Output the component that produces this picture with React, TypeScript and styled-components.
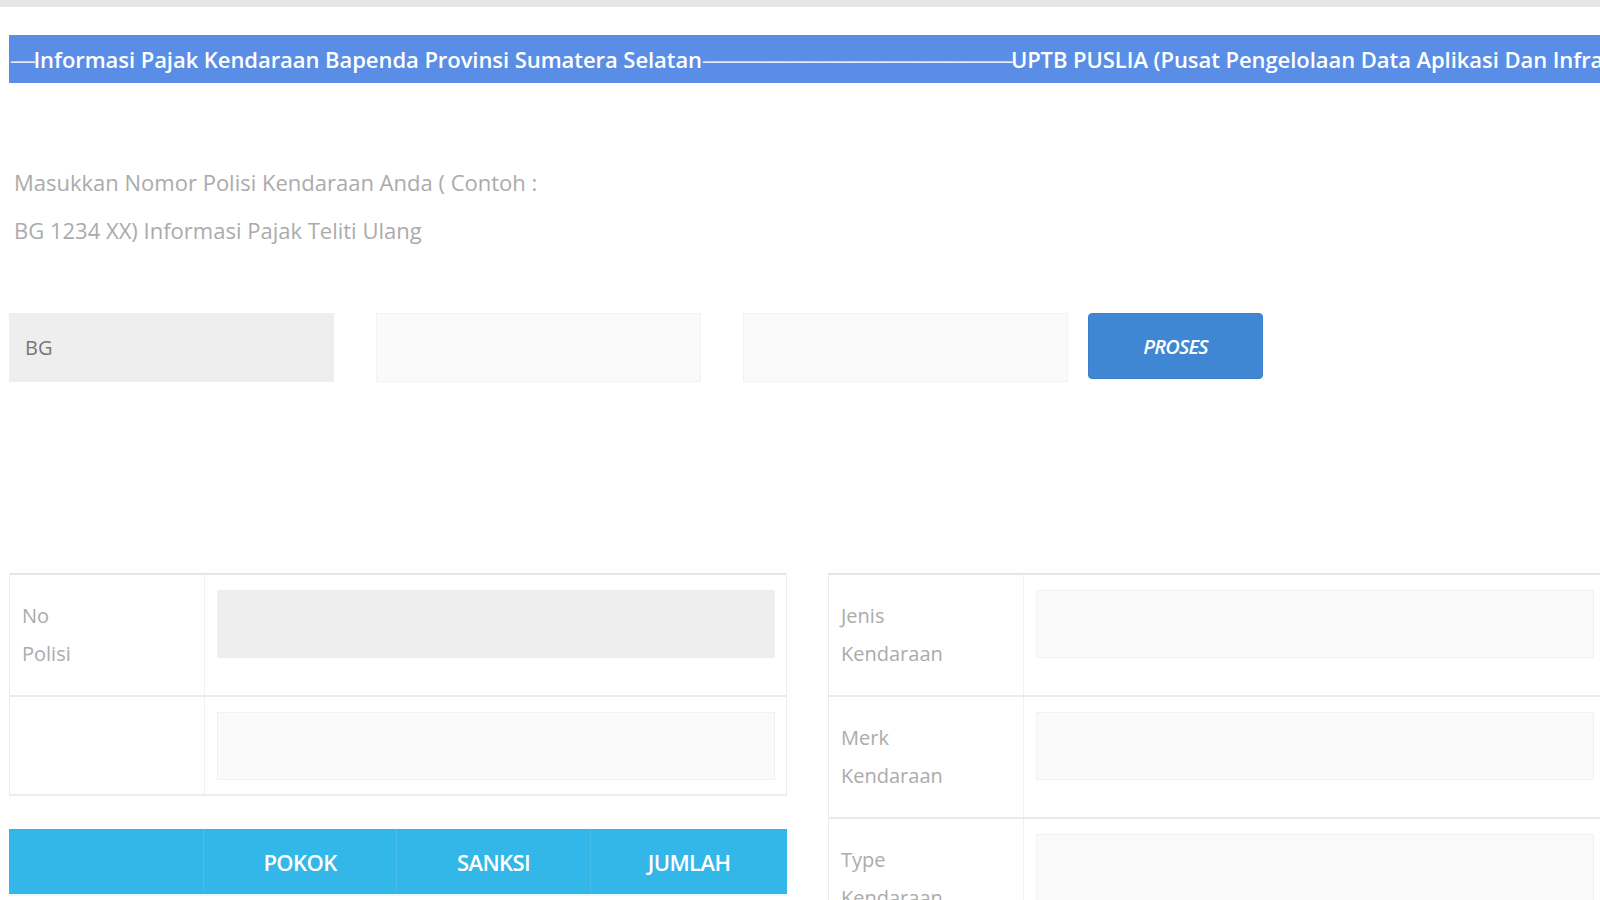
import React, { FC } from 'react';
import styled, { createGlobalStyle } from 'styled-components';

const GlobalStyle = createGlobalStyle`
    html, body {
        margin: 0;
        padding: 0;
        background: #ffffff;
        overflow: hidden;
    }
    body {
        font-family: "Open Sans", "Liberation Sans", sans-serif;
    }
`;

const TopStripe = styled.div`
    height: 7px;
    background: #e6e6e6;
`;

const Page = styled.div`
    width: 1640px;
    padding: 28px 0 0 9px;
    box-sizing: border-box;
`;

const Banner = styled.div`
    height: 48px;
    display: flex;
    align-items: center;
    background: #5a8ee6;
    color: #ffffff;
    font-size: 22px;
    font-weight: 600;
    letter-spacing: -0.06px;
    white-space: nowrap;
    overflow: hidden;
    padding-left: 1px;
`;

const Dash = styled.span`
    letter-spacing: -2.4px;
    opacity: 0.85;
    font-weight: 400;
`;

const Intro = styled.p`
    width: 540px;
    margin: 75px 0 0 5px;
    font-size: 22px;
    line-height: 48px;
    color: #ababab;
`;

const PlateRow = styled.div`
    display: flex;
    align-items: flex-start;
    gap: 42px;
    margin-top: 59px;
`;

const PlateInput = styled.div<{ $filled?: boolean }>`
    width: 325px;
    height: 69px;
    box-sizing: border-box;
    display: flex;
    align-items: center;
    padding-left: 15px;
    font-size: 20px;
    color: #777777;
    background: ${(p) => (p.$filled ? '#eeeeee' : '#fafafa')};
    border: 1px solid ${(p) => (p.$filled ? '#eeeeee' : '#f2f2f2')};
`;

const ProsesButton = styled.button`
    margin-left: -22px;
    width: 175px;
    height: 66px;
    border: 1px solid #3a7fc8;
    border-radius: 4px;
    background: #3f87d2;
    color: #ffffff;
    font-family: "Open Sans", "Liberation Sans", sans-serif;
    font-size: 20px;
    font-weight: 600;
    font-style: italic;
    letter-spacing: -0.8px;
    cursor: pointer;
`;

const Columns = styled.div`
    display: flex;
    align-items: flex-start;
    gap: 41px;
    margin-top: 191px;
`;

const Column = styled.div`
    width: 778px;
    display: flex;
    flex-direction: column;
`;

const DataTable = styled.div`
    border: 1px solid #ececec;
    border-top: 2px solid #e6e6e6;
`;

const DataRow = styled.div`
    display: grid;
    grid-template-columns: 195px 1fr;
    border-bottom: 2px solid #eaeaea;

    &:last-child {
        border-bottom: 1px solid #ededed;
    }
`;

const LabelCell = styled.div`
    padding: 22px 12px;
    font-size: 20px;
    line-height: 38px;
    color: #ababab;
    border-right: 1px solid #f1f1f1;
`;

const ValueCell = styled.div`
    padding: 15px 11px 14px 12px;
`;

const ValueBox = styled.div<{ $filled?: boolean }>`
    height: 68px;
    box-sizing: border-box;
    background: ${(p) => (p.$filled ? '#eeeeee' : '#fafafa')};
    border: 1px solid ${(p) => (p.$filled ? '#eeeeee' : '#f1f1f1')};
`;

const SumHeader = styled.div`
    margin-top: 33px;
    height: 65px;
    display: grid;
    grid-template-columns: 195px 193px 194px 1fr;
    background: #33b6e8;
    box-shadow: 0 2px 0 #e9f6fc;
`;

const SumCell = styled.div`
    display: flex;
    align-items: center;
    justify-content: center;
    color: #ffffff;
    font-size: 22px;
    font-weight: 600;
    letter-spacing: -0.6px;
    border-right: 1px solid rgba(255, 255, 255, 0.1);

    &:last-child {
        border-right: none;
    }
`;

const leftRows = [
    { label: ['No', 'Polisi'], filled: true },
    { label: [], filled: false },
];

const rightRows = [
    { label: ['Jenis', 'Kendaraan'] },
    { label: ['Merk', 'Kendaraan'] },
    { label: ['Type', 'Kendaraan'] },
    { label: ['Tahun', 'Pembuatan'] },
];

const Label: FC<{ lines: string[] }> = ({ lines }) => (
    <LabelCell>
        {lines.map((l, i) => (
            <div key={i}>{l}</div>
        ))}
    </LabelCell>
);

const App: FC = () => {
    return (
        <>
            <GlobalStyle />
            <TopStripe />
            <Page>
                <Banner>
                    <Dash>{'-'.repeat(5)}</Dash>
                    Informasi Pajak Kendaraan Bapenda Provinsi Sumatera Selatan
                    <Dash>{'-'.repeat(66)}</Dash>
                    UPTB PUSLIA (Pusat Pengelolaan Data Aplikasi Dan Infrastruktur)
                </Banner>

                <Intro>
                    Masukkan Nomor Polisi Kendaraan Anda ( Contoh : BG 1234 XX) Informasi Pajak Teliti Ulang
                </Intro>

                <PlateRow>
                    <PlateInput $filled>BG</PlateInput>
                    <PlateInput />
                    <PlateInput />
                    <ProsesButton>PROSES</ProsesButton>
                </PlateRow>

                <Columns>
                    <Column>
                        <DataTable>
                            {leftRows.map((r, i) => (
                                <DataRow key={i}>
                                    <Label lines={r.label} />
                                    <ValueCell>
                                        <ValueBox $filled={r.filled} />
                                    </ValueCell>
                                </DataRow>
                            ))}
                        </DataTable>
                        <SumHeader>
                            <SumCell />
                            <SumCell>POKOK</SumCell>
                            <SumCell>SANKSI</SumCell>
                            <SumCell>JUMLAH</SumCell>
                        </SumHeader>
                    </Column>
                    <Column>
                        <DataTable>
                            {rightRows.map((r, i) => (
                                <DataRow key={i}>
                                    <Label lines={r.label} />
                                    <ValueCell>
                                        <ValueBox />
                                    </ValueCell>
                                </DataRow>
                            ))}
                        </DataTable>
                    </Column>
                </Columns>
            </Page>
        </>
    );
};

export default App;
